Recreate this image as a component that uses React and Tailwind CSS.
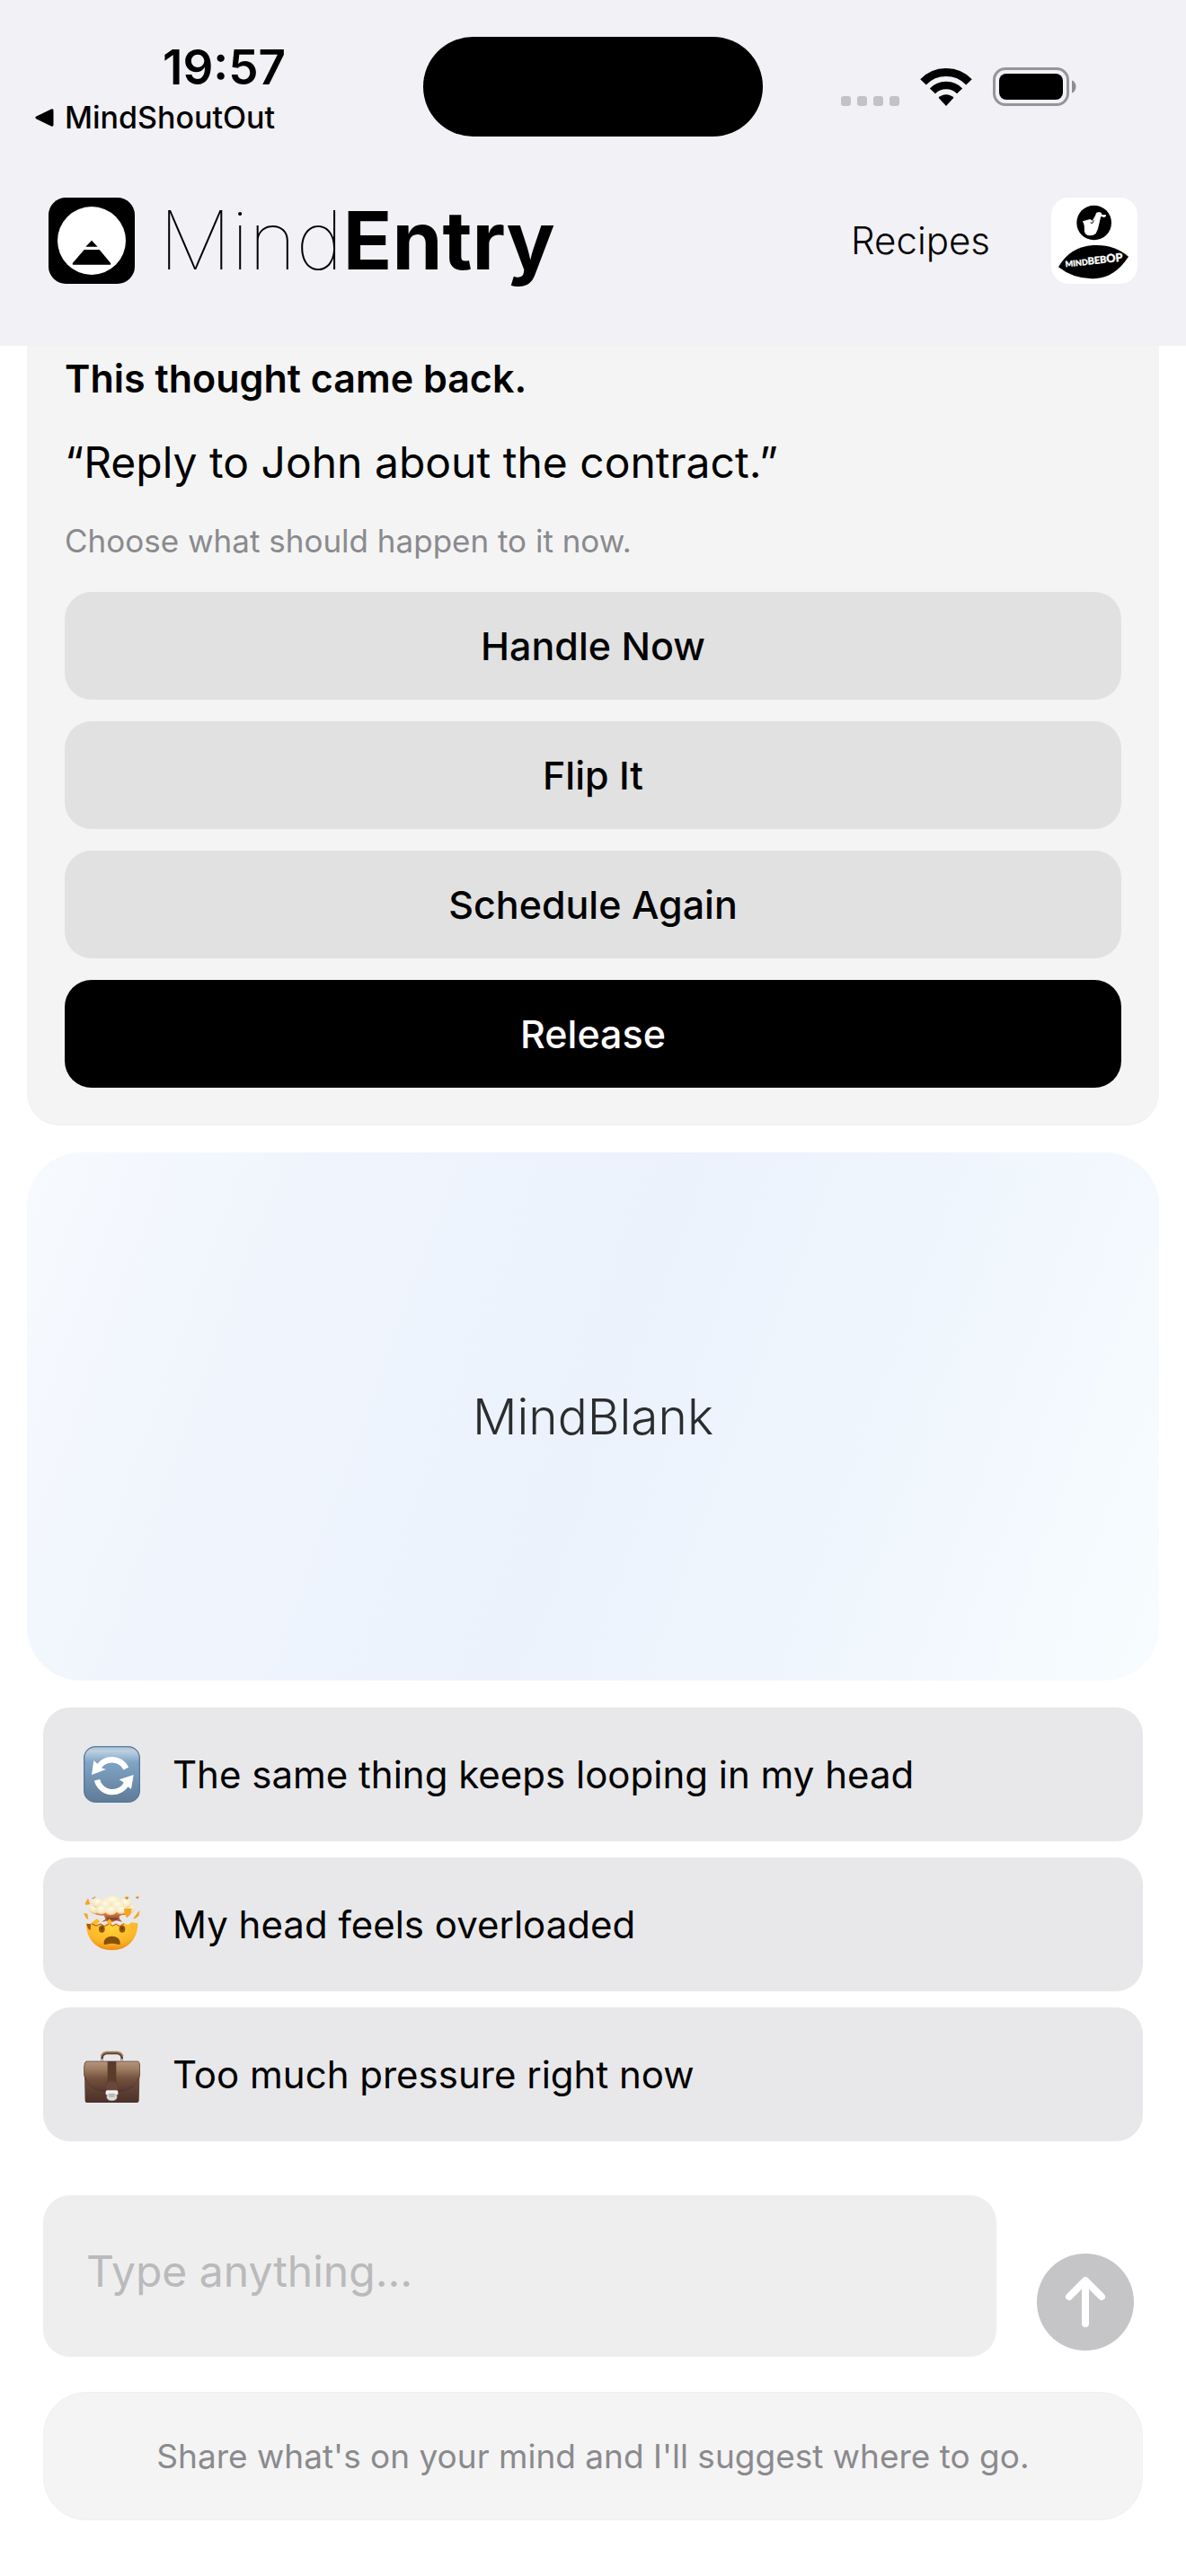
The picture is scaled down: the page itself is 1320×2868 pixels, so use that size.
import { useState } from 'react'

const thoughtActions = [
  { label: 'Handle Now' },
  { label: 'Flip It' },
  { label: 'Schedule Again' },
  { label: 'Release', primary: true },
]

const suggestions = [
  { label: 'The same thing keeps looping in my head', Icon: LoopIcon },
  { label: 'My head feels overloaded', Icon: ExplodingHeadIcon },
  { label: 'Too much pressure right now', Icon: BriefcaseIcon },
]

function StatusBar() {
  return (
    <div className="grid grid-cols-[1fr_378px_1fr] pt-[41px]">
      <div className="h-[111px] pt-1 pl-[38px] flex flex-col items-start">
        <span className="pl-[143px] text-[53px] leading-[60px] font-semibold">19:57</span>
        <a href="#back" className="flex items-center gap-3 text-[34px] leading-[52px] font-medium">
          <svg className="w-[22px] h-[22px]" viewBox="0 0 22 22" aria-hidden="true">
            <path d="M19 1.5 2.5 9.6Q0 11 2.5 12.4L19 20.5Q21.5 21.5 21.5 19V3Q21.5.5 19 1.5Z" />
          </svg>
          MindShoutOut
        </a>
      </div>
      <div className="h-[111px] rounded-full bg-black" />
      <div className="flex items-center justify-end gap-[23px] pr-[122px]">
        <div className="flex gap-[7px] h-[42px] items-end">
          <span className="size-[11px] rounded-[3px] bg-[#c3c2c7]" />
          <span className="size-[11px] rounded-[3px] bg-[#c3c2c7]" />
          <span className="size-[11px] rounded-[3px] bg-[#c3c2c7]" />
          <span className="size-[11px] rounded-[3px] bg-[#c3c2c7]" />
        </div>
        <svg className="w-[58px] h-[42px]" viewBox="0 0 58 42" aria-hidden="true">
          <path d="M3.5 15.3a35.5 35.5 0 0 1 51 0" fill="none" stroke="#000" strokeWidth="9" />
          <path d="M13.9 25.4a21 21 0 0 1 30.2 0" fill="none" stroke="#000" strokeWidth="8.5" />
          <path d="M20.5 32.8a12 12 0 0 1 17 0L29 42Z" />
        </svg>
        <svg className="w-[93px] h-[43px]" viewBox="0 0 93 43" aria-hidden="true">
          <rect x="1.5" y="1.5" width="82" height="40" rx="12.5" fill="none" stroke="#96959a" strokeWidth="3" />
          <rect x="7" y="7" width="71" height="29" rx="8" />
          <path d="M88 14.5c6 2 6 12 0 14Z" fill="#8e8d92" />
        </svg>
      </div>
    </div>
  )
}

function AppLogo() {
  return (
    <svg className="size-24" viewBox="0 0 288 288" aria-hidden="true">
      <rect width="288" height="288" rx="58" />
      <circle cx="144" cy="144" r="114" fill="#fff" />
      <path d="M144 143 164 164H124Z" />
      <path d="M119 174h51l37 44q3 6-3 6H84q-6 0-3-6Z" />
    </svg>
  )
}

function MindBebopLogo() {
  return (
    <svg className="size-24" viewBox="0 0 288 288" aria-hidden="true">
      <rect width="288" height="288" rx="58" fill="#fff" />
      <circle cx="143" cy="84" r="58" />
      <path
        d="M105 79 130 72 137 77 146 62 151 50 160 48 167 51 170 58 182 57 183 62 177 66 166 63 163 74 156 104 149 120Q141 128 128 127 114 126 111 113L110 92Z"
        fill="#fff"
      />
      <path d="M131 83 137 86 142 76" fill="none" stroke="#000" strokeWidth="3" />
      <path d="M24 232Q62 164 140 159 210 155 258 197 214 265 150 270 78 275 24 232Z" />
      <text
        transform="rotate(-6 48 232)"
        x="48"
        y="232"
        fill="#fff"
        stroke="#fff"
        strokeWidth="1"
        className="font-['Lato'] font-black"
      >
        <tspan fontSize="27">MIND</tspan>
        <tspan fontSize="33">BEB</tspan>
        <tspan fontSize="38">OP</tspan>
      </text>
    </svg>
  )
}

function LoopIcon() {
  return (
    <svg className="size-[63px] shrink-0" viewBox="0 0 189 189" aria-hidden="true">
      <defs>
        <linearGradient id="loop-bg" x1="0" y1="0" x2="0" y2="1">
          <stop offset="0" stopColor="#a9c0d6" />
          <stop offset="0.08" stopColor="#bdd0e2" />
          <stop offset="0.28" stopColor="#80a4c6" />
          <stop offset="1" stopColor="#5f7b97" />
        </linearGradient>
      </defs>
      <rect x="2" y="2" width="185" height="185" rx="38" fill="url(#loop-bg)" stroke="#57799a" strokeWidth="4" />
      <path d="M142 75A53 53 0 0 0 50 70" fill="none" stroke="#fff" strokeWidth="19" />
      <path d="M34 48 50 62 60 73 75 78 27 96Z" fill="#fff" />
      <path d="M45 113A53 53 0 0 0 144 124" fill="none" stroke="#fff" strokeWidth="19" />
      <path d="M167 96 159 144 146 134 133 121 119 112Z" fill="#fff" />
    </svg>
  )
}

function ExplodingHeadIcon() {
  return (
    <svg className="size-[63px] shrink-0" viewBox="0 0 189 189" aria-hidden="true">
      <defs>
        <radialGradient id="face" cx="0.5" cy="0.2" r="0.85">
          <stop offset="0" stopColor="#ffd337" />
          <stop offset="0.6" stopColor="#fdb528" />
          <stop offset="1" stopColor="#e98413" />
        </radialGradient>
        <radialGradient id="puff" cx="0.5" cy="0.3" r="0.75">
          <stop offset="0" stopColor="#fffbe6" />
          <stop offset="0.65" stopColor="#f6e8be" />
          <stop offset="1" stopColor="#e2b87c" />
        </radialGradient>
      </defs>
      <path
        d="M9 91 22 93 34 88 43 97 58 91 70 98 86 88 96 97 108 92 120 98 133 89 148 96 160 88 181 91C181 146 146 181 95 181S9 146 9 91Z"
        fill="url(#face)"
      />
      <path d="M10 93 24 93 23 114 15 109Z" fill="#a75516" />
      <path d="M26 92 42 99 57 93 70 101 86 92 97 100 108 93 121 101 135 93" fill="none" stroke="#a8521c" strokeWidth="3" />
      <path d="M67 62h58l-6 12 10 12-20-4-14 5-18-4-16 3 12-12Z" fill="#b5623a" />
      <path d="M76 72h40l-4 8H80Z" fill="#7e4a2e" />
      <path d="M20 50Q40 66 75 65L125 64Q158 62 168 45L150 36H35Z" fill="#d9753a" />
      <g fill="url(#puff)">
        <ellipse cx="38" cy="43" rx="21" ry="16" />
        <ellipse cx="153" cy="42" rx="18" ry="16" />
        <ellipse cx="47" cy="24" rx="19" ry="16" />
        <ellipse cx="139" cy="25" rx="22" ry="17" />
        <ellipse cx="96" cy="18" rx="31" ry="18" />
        <ellipse cx="72" cy="31" rx="21" ry="18" />
        <ellipse cx="113" cy="33" rx="23" ry="18" />
        <ellipse cx="59" cy="47" rx="19" ry="14" />
        <ellipse cx="91" cy="49" rx="20" ry="15" />
        <ellipse cx="126" cy="47" rx="19" ry="13" />
      </g>
      <path d="M27 88 45 76 54 84 44 95ZM86 76 96 87 88 96 77 86Z" fill="#ffb81c" />
      <path d="M135 42 161 41 157 61 145 73 137 60ZM187 47 185 65 172 76 166 74ZM0 57 13 59 16 79 8 73ZM5 25 15 7 22 27 8 30Z" fill="#f5a51f" />
      <path d="M138 4 150 3 145 12ZM174 4 184 2 181 9ZM28 8 40 3 35 7Z" fill="#df8e20" stroke="#df8e20" strokeWidth="2" />
      <path d="M54 75 63 69 73 79 62 83ZM118 67 129 66 138 74 143 84 128 80Z" fill="#eee6e6" />
      <ellipse cx="61" cy="110" rx="10" ry="12" fill="#94560a" />
      <ellipse cx="61" cy="108" rx="4" ry="5" fill="#714008" />
      <ellipse cx="129" cy="110" rx="10" ry="12" fill="#94560a" />
      <ellipse cx="129" cy="108" rx="4" ry="5" fill="#714008" />
      <path d="M68 158C65 126 125 126 122 158 122 164 118 162 114 161Q95 155 76 161C72 162 68 164 68 158Z" fill="#855009" />
    </svg>
  )
}

function BriefcaseIcon() {
  return (
    <svg className="size-[63px] shrink-0" viewBox="0 0 189 189" aria-hidden="true">
      <defs>
        <linearGradient id="case" x1="0" y1="0" x2="0" y2="1">
          <stop offset="0" stopColor="#a88468" />
          <stop offset="0.25" stopColor="#97745a" />
          <stop offset="0.55" stopColor="#68483a" />
          <stop offset="1" stopColor="#4b2f28" />
        </linearGradient>
        <linearGradient id="flap" x1="0" y1="0" x2="0" y2="1">
          <stop offset="0" stopColor="#b5967b" />
          <stop offset="0.25" stopColor="#a07c61" />
          <stop offset="0.55" stopColor="#755240" />
          <stop offset="1" stopColor="#54382d" />
        </linearGradient>
      </defs>
      <path d="M62 48V38Q64 24 80 24H110Q126 24 128 38V48" fill="none" stroke="#5c4032" strokeWidth="8" />
      <path d="M59 34Q64 20 80 20H110Q126 20 131 34" fill="none" stroke="#a5805f" strokeWidth="5" />
      <path d="M62 50V42M128 50V42" stroke="#c7c1bd" strokeWidth="6" />
      <path d="M9 51H182Q188 53 188 70L185 183Q184 189 178 189H12Q5 189 5 183L2 70Q3 53 9 51Z" fill="url(#case)" />
      <path d="M9 51H182Q188 53 188 70V98Q174 151 110 153H80Q16 151 2 98V70Q3 53 9 51Z" fill="url(#flap)" stroke="#49332b" strokeWidth="2" />
      <path d="M80 51H109V115Q113 122 113 129H76Q76 122 80 115Z" fill="#5b3b2b" />
      <path d="M76 129Q78 118 94 117 110 118 113 129V148H76Z" fill="#69473a" />
      <path d="M78 148H111Q115 148 115 153V162H74V153Q74 148 78 148Z" fill="#f4f4f4" />
      <path d="M78 162H111V173C109 185 80 185 78 173Z" fill="#dddddc" stroke="#b0acab" strokeWidth="2" />
      <path d="M84 158H104V171H84Z" fill="#bcbab9" />
    </svg>
  )
}

function Header() {
  return (
    <header className="bg-[#f2f1f6] pb-[69px]">
      <StatusBar />
      <div className="mt-[68px] px-[54px] flex items-center justify-between">
        <div className="flex items-center gap-[27px]">
          <AppLogo />
          <h1 className="text-[90px] leading-[96px] font-bold">
            <span className="font-thin">Mind</span>Entry
          </h1>
        </div>
        <nav className="flex items-center gap-[68px]">
          <a href="#recipes" className="text-[42px] leading-[56px] font-light">
            Recipes
          </a>
          <a href="#mindbebop" aria-label="MindBebop">
            <MindBebopLogo />
          </a>
        </nav>
      </div>
    </header>
  )
}

function ThoughtCard() {
  return (
    <section className="mx-[30px] px-[42px] pt-2 pb-[41px] rounded-b-[36px] border-b border-[#efefef] bg-[#f4f4f4] flex flex-col gap-9">
      <h2 className="text-[43px] leading-[56px] font-semibold">This thought came back.</h2>
      <p className="text-[48px] leading-[60px]">“Reply to John about the contract.”</p>
      <p className="text-[35px] leading-[42px] text-[#8a8a8e]">Choose what should happen to it now.</p>
      <div className="flex flex-col gap-6">
        {thoughtActions.map(({ label, primary }) => (
          <button
            key={label}
            type="button"
            className={`py-8 rounded-[30px] text-[43px] leading-[56px] font-medium ${
              primary ? 'bg-black text-white' : 'bg-[#e1e1e1]'
            }`}
          >
            {label}
          </button>
        ))}
      </div>
    </section>
  )
}

export default function App() {
  const [message, setMessage] = useState('')

  return (
    <div className="min-h-screen bg-white text-black font-['Inter','Liberation_Sans',sans-serif]">
      <Header />
      <main className="pb-12">
        <ThoughtCard />

        <button
          type="button"
          className="mt-[30px] mx-[30px] w-[calc(100%-60px)] py-[258px] rounded-[60px] bg-[linear-gradient(110deg,#f7fafe_0%,#f0f5fd_22%,#ebf2fc_50%,#eff6fd_72%,#f7fcfe_100%)] text-[55px] leading-[72px] font-light text-[#2b2c2e]"
        >
          MindBlank
        </button>

        <div className="mt-[30px] px-12 flex flex-col gap-[18px]">
          {suggestions.map(({ label, Icon }) => (
            <button
              key={label}
              type="button"
              className="flex items-center gap-9 px-[45px] py-[43px] rounded-[30px] bg-[#e8e8ea] text-left text-[42px] leading-[56px]"
            >
              <Icon />
              {label}
            </button>
          ))}
        </div>

        <form
          className="mt-[60px] pl-12 pr-[58px] flex items-end gap-[45px]"
          onSubmit={(e) => e.preventDefault()}
        >
          <textarea
            rows={1}
            aria-label="Your thought"
            placeholder="Type anything..."
            value={message}
            onChange={(e) => setMessage(e.target.value)}
            className="flex-1 min-w-0 block resize-none px-12 pt-[55px] pb-[65px] rounded-[30px] bg-[#eeeeee] text-[48px] leading-[60px] placeholder:text-[#bababc] outline-none"
          />
          <button
            type="submit"
            aria-label="Send"
            className="mb-[7px] size-[108px] rounded-full bg-[#c5c5c7] flex items-center justify-center"
          >
            <svg className="w-[46px] h-[56px]" viewBox="0 0 46 56" fill="none" stroke="#fff" strokeWidth="8" strokeLinecap="round" strokeLinejoin="round" aria-hidden="true">
              <path d="M23 52V5M5 22 23 4 41 22" />
            </svg>
          </button>
        </form>

        <p className="mt-[39px] mx-12 px-6 py-[47px] rounded-[48px] border border-[#f0f0f0] bg-[#f4f4f4] text-center text-[37px] leading-[47px] text-[#8a8a8e]">
          Share what's on your mind and I'll suggest where to go.
        </p>
      </main>
    </div>
  )
}
